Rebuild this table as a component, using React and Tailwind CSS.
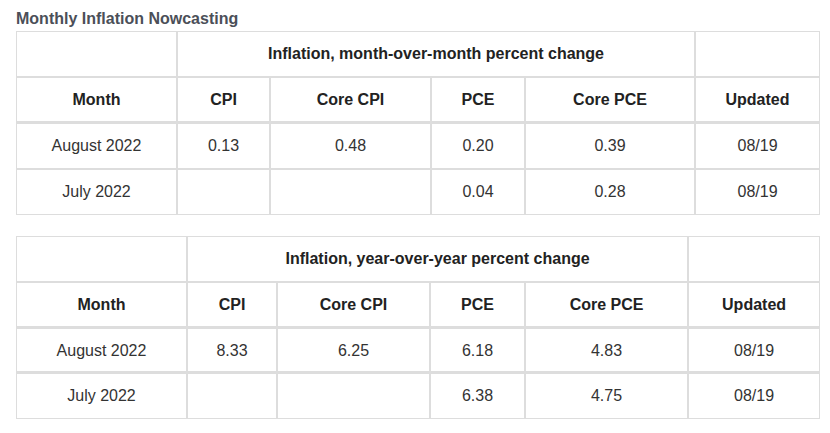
import React from 'react';

const tables = [
  {
    title: 'Inflation, month-over-month percent change',
    widths: [161, 93, 161, 94, 170, 125],
    thickRow: false,
    rows: [
      ['August 2022', '0.13', '0.48', '0.20', '0.39', '08/19'],
      ['July 2022', '', '', '0.04', '0.28', '08/19'],
    ],
  },
  {
    title: 'Inflation, year-over-year percent change',
    widths: [171, 90, 153, 95, 163, 132],
    thickRow: true,
    rows: [
      ['August 2022', '8.33', '6.25', '6.18', '4.83', '08/19'],
      ['July 2022', '', '', '6.38', '4.75', '08/19'],
    ],
  },
];

const headers = ['Month', 'CPI', 'Core CPI', 'PCE', 'Core PCE', 'Updated'];

const cell = 'border border-[#dddddd] px-2 pt-[11px] leading-[22px] text-center';

const NowcastTable = ({ table }) => (
  <table className="table-fixed border-separate border-spacing-0 w-[804px]">
    <colgroup>
      {table.widths.map((w, i) => (
        <col key={i} style={{ width: w }} />
      ))}
    </colgroup>
    <thead>
      <tr>
        <th className={`${cell} pb-[11px] font-bold text-[#222]`}></th>
        <th colSpan={4} className={`${cell} pb-[11px] font-bold text-[#222]`}>
          {table.title}
        </th>
        <th className={`${cell} pb-[11px] font-bold text-[#222]`}></th>
      </tr>
      <tr>
        {headers.map((h) => (
          <th key={h} className={`${cell} border-b-2 pb-[10px] font-bold text-[#222]`}>
            {h}
          </th>
        ))}
      </tr>
    </thead>
    <tbody>
      {table.rows.map((row, r) => (
        <tr key={r}>
          {row.map((v, i) => (
            <td
              key={i}
              className={`${cell} text-[#333] ${table.thickRow && r === 0 ? 'border-b-2 pb-[9px]' : 'pb-[11px]'}`}
            >
              {v}
            </td>
          ))}
        </tr>
      ))}
    </tbody>
  </table>
);

export default function App() {
  return (
    <div className="bg-white w-[830px] h-[433px] pl-4 pt-[9px] font-['Liberation_Sans',Arial,sans-serif] text-[16px]">
      <h1 className="font-bold leading-5 text-[#4b4f58] mb-[2px]">Monthly Inflation Nowcasting</h1>
      <div className="flex flex-col gap-[21px]">
        {tables.map((t, i) => (
          <NowcastTable key={i} table={t} />
        ))}
      </div>
    </div>
  );
}
